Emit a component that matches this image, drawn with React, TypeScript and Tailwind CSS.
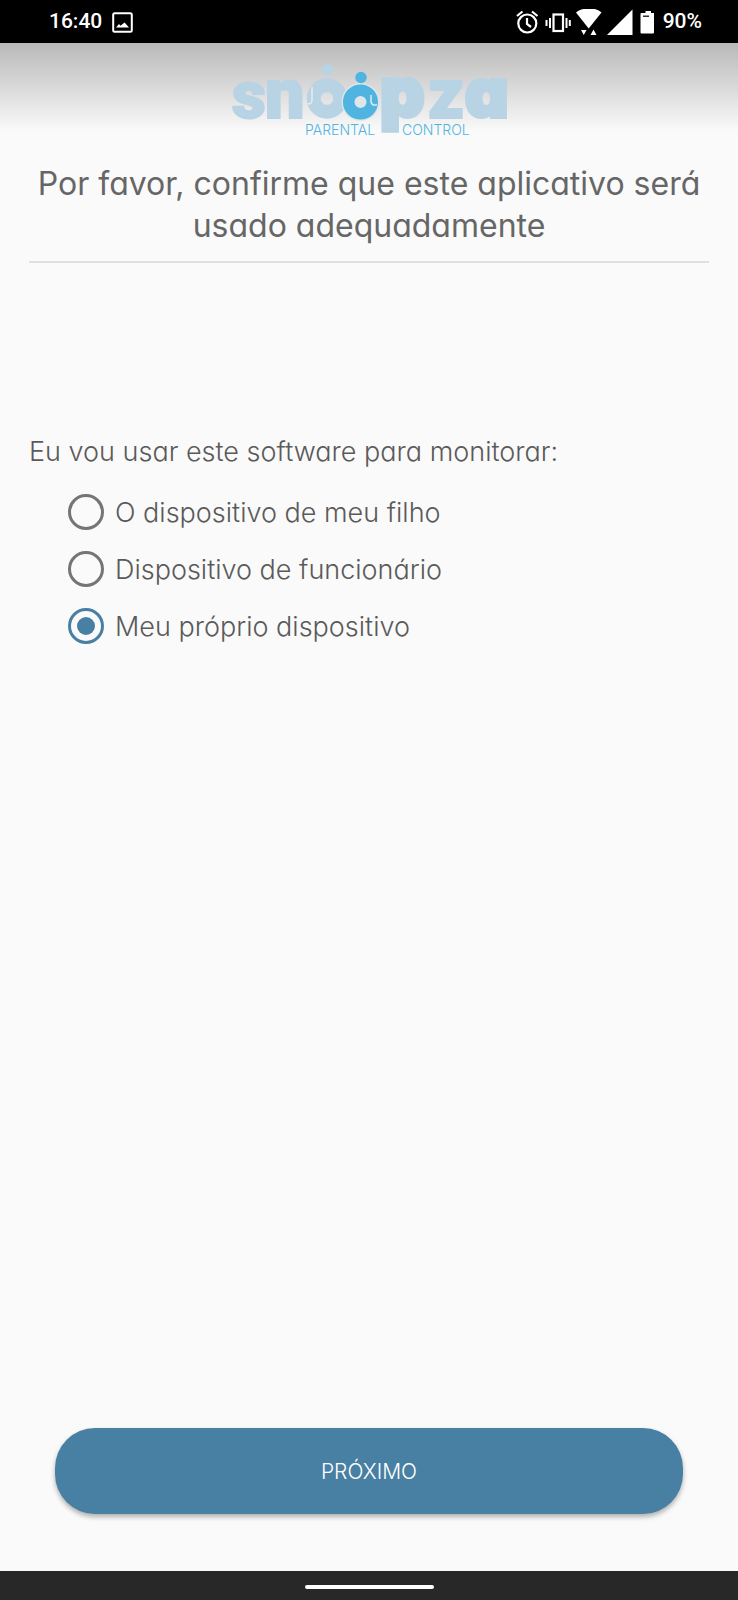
import React, { useState } from "react";

const targets = ["O dispositivo de meu filho", "Dispositivo de funcionário", "Meu próprio dispositivo"];

function StatusBar() {
  return (
    <div className="flex h-[43px] shrink-0 items-center justify-between bg-black pt-px pl-[49px] pr-9 font-['Roboto',sans-serif] text-[21px] font-medium text-white">
      <div className="flex items-center gap-[10px]">
        <span>16:40</span>
        <svg className="size-[21px]" viewBox="0 0 21 21" aria-hidden="true">
          <rect x="1.2" y="1.2" width="18.6" height="18.6" rx="1.5" fill="none" stroke="#fff" strokeWidth="2" />
          <path d="M4 15.500 L7 12 L8.500 13.800 L12.600 10.500 L17 15.500Z" fill="#fff" />
        </svg>
      </div>
      <div className="flex items-center gap-[9px]">
        <svg className="h-[26px] w-[138px]" viewBox="516 8 138 26" aria-hidden="true">
          <g fill="none" stroke="#fff" strokeWidth="2.2">
            <circle cx="527.3" cy="22.5" r="9" />
            <path d="M527 17v6l4 3M517 15l5.500-4.500M537.500 15l-5.500-4.500" />
            <rect x="553.500" y="13.500" width="9.500" height="16.500" />
            <path d="M550 17v10M546.500 19v6M566.500 17v10M569.800 19v6" strokeWidth="2" />
          </g>
          <g fill="#fff">
            <path d="M576 11.500c7-5.500 19-5.500 25.500 0L588.700 27.500Z" />
            <path d="M581 29h5.500l-2.700 5ZM590.500 34h6l-3-5.500Z" />
            <path d="M607 34L632.500 8.500V34Z" />
            <path d="M641.500 12h4V10h5.500v2h3V31.500q0 1-1 1h-11.500q-1 0-1-1V13q0-1 1-1Z" />
          </g>
          <path d="M643 15.200h6" stroke="#000" strokeWidth="1.200" />
        </svg>
        <span>90%</span>
      </div>
    </div>
  );
}

function Logo() {
  return (
    <svg className="h-[74px] w-[278px] overflow-visible" viewBox="231 64 278 74" role="img" aria-label="Snoopza Parental Control">
      <g fill="#b8d3e4" stroke="#b8d3e4" strokeWidth="2" fontFamily="Roboto, sans-serif" fontWeight="900" fontSize="70">
        <text x="233" y="118" fontSize="66">s</text>
        <text x="266" y="118">n</text>
        <text x="381" y="117" className="font-['Inter',sans-serif]" fontSize="69" strokeWidth="4">p</text>
        <text x="429" y="118">z</text>
        <text x="466" y="117" className="font-['Inter',sans-serif] [font-feature-settings:'cv11']" fontSize="67" strokeWidth="4">a</text>
      </g>
      <circle cx="328" cy="98.500" r="13.300" strokeWidth="14" fill="none" stroke="#b8d3e4" />
      <circle cx="328.500" cy="69.500" r="5.500" fill="#b8d3e4" />
      <path d="M313 87v13q0 4-4 4q-3 0-3-4" fill="none" stroke="#e3eaee" strokeWidth="1.500" />
      <circle cx="361.500" cy="102" r="19" fill="#dfe5e8" />
      <circle cx="361.500" cy="102" r="11.800" fill="none" stroke="#4fb4e0" strokeWidth="11.500" />
      <circle cx="362" cy="77.500" r="5.700" fill="#4fb4e0" />
      <path d="M372 95v7q1 3 3 3h3" fill="none" stroke="#dfeaf0" strokeWidth="1.500" />
      <g fill="#4fb4e0" fontFamily="Inter, sans-serif" fontSize="14">
        <text x="306" y="135">PARENTAL</text>
        <text x="403" y="135">CONTROL</text>
      </g>
    </svg>
  );
}

export default function App() {
  const [target, setTarget] = useState(2);
  return (
    <div className="flex min-h-screen flex-col bg-[#fafafa] font-['Inter',sans-serif] font-light text-[#5a5a5a] [font-feature-settings:'cv11']">
      <StatusBar />
      <header className="flex h-[115px] shrink-0 justify-center bg-linear-to-b from-[#b9b9b9] to-[#fafafa] to-[88px] pt-[21px]">
        <Logo />
      </header>
      <main className="flex flex-1 flex-col px-[29px]">
        <h1 className="border-b-2 border-[#e0e0e0] pt-[5px] pb-[14px] text-center text-[32px] leading-[42px] font-normal text-[#666666]">
          Por favor, confirme que este aplicativo será usado adequadamente
        </h1>
        <fieldset className="mt-[171px]">
          <legend className="text-[27px] leading-9">Eu vou usar este software para monitorar:</legend>
          <div className="flex flex-col pt-[13px] pl-[39px]">
            {targets.map((label, i) => (
              <label key={label} className="flex h-[57px] items-center gap-[11px] text-[27px]">
                <input
                  type="radio"
                  name="target"
                  checked={target === i}
                  onChange={() => setTarget(i)}
                  className="size-9 appearance-none rounded-full border-[3px] border-[#757575] bg-clip-content p-[6px] checked:border-[#4880a3] checked:bg-[#4880a3]"
                />
                <span className="pt-1">{label}</span>
              </label>
            ))}
          </div>
        </fieldset>
        <button type="button" className="mx-[26px] mt-auto mb-[57px] h-[86px] rounded-[40px] bg-[#4880a3] pt-0.5 text-[21px] text-white shadow-[0_3px_5px_rgba(0,0,0,0.3)]">
          PRÓXIMO
        </button>
      </main>
      <footer className="flex h-[29px] shrink-0 items-center justify-center bg-[#282828] pt-[3px]">
        <div className="h-1 w-[129px] rounded-full bg-white" />
      </footer>
    </div>
  );
}
